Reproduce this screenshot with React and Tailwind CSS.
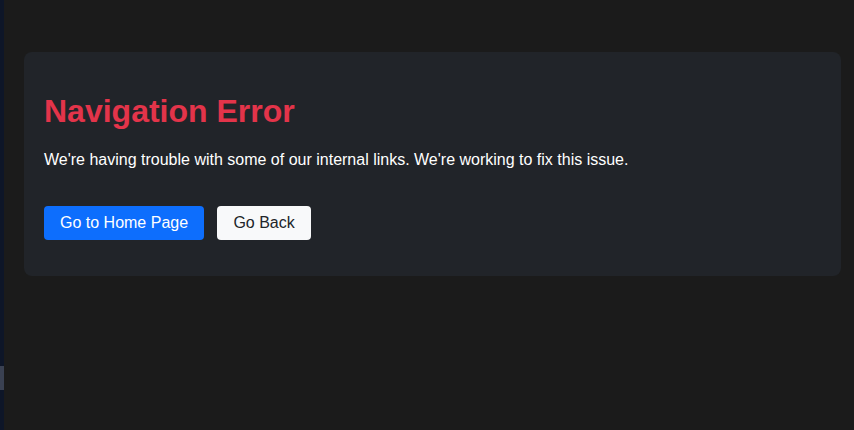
export default function App() {
  return (
    <div className="flex min-h-[430px] w-full bg-[#1b1b1b] font-['Liberation_Sans',Arial,sans-serif]">
      <div className="flex w-[4px] flex-col bg-[#0e1628]">
        <div className="h-[366px]" />
        <div className="h-[24px] bg-[#3a4152]" />
      </div>
      <div className="flex-1 pl-5 pr-[13px] pt-[52px]">
        <div className="rounded-lg bg-[#212429] px-5 pb-9 pt-[39px]">
          <h1 className="text-[32px] font-bold leading-10 text-[#e3344a]">Navigation Error</h1>
          <p className="mt-[17px] text-base leading-6 text-white">
            We're having trouble with some of our internal links. We're working to fix this issue.
          </p>
          <div className="mt-[34px] flex gap-[13px]">
            <button className="h-[34px] rounded bg-[#0d6efd] px-4 text-base text-white">Go to Home Page</button>
            <button className="h-[34px] w-[94px] rounded bg-[#f8f9fa] text-base text-[#212529]">Go Back</button>
          </div>
        </div>
      </div>
    </div>
  );
}
